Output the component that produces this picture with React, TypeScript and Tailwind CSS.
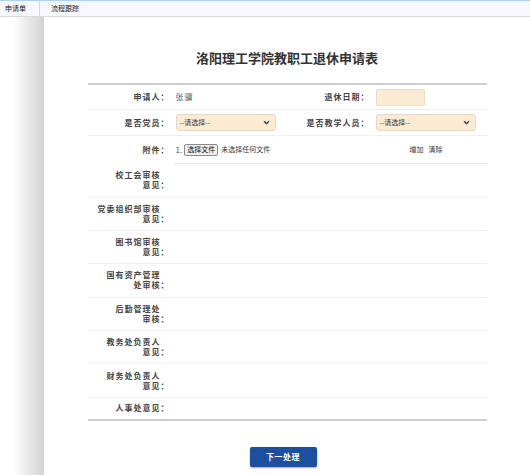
import React from "react";

function Chevron() {
  return (
    <svg width="7" height="5" viewBox="0 0 7 5" className="shrink-0">
      <path d="M1 1.2 L3.5 3.6 L6 1.2" fill="none" stroke="#333" strokeWidth="1.3" />
    </svg>
  );
}

function Select({ w }: { w: string }) {
  return (
    <div
      className={`${w} h-[17px] bg-[#fbebd3] border border-[#e3d9c9] rounded-[3px] flex items-center justify-between pl-[3px] pr-[5px] text-[7px] text-[#333]`}
    >
      <span>--请选择--</span>
      <Chevron />
    </div>
  );
}

function Label({ lines }: { lines: string[] }) {
  if (lines.length === 1) {
    return (
      <div className="h-full flex items-center justify-end pr-[4px] text-[8px] font-bold tracking-[1px] text-[#444] leading-[10px]">
        {lines[0]}
      </div>
    );
  }
  return (
    <div className="h-full flex flex-col items-end justify-center pr-[4px] text-[8px] font-bold tracking-[1px] text-[#444] leading-[10px]">
      <div className="pr-[9px]">{lines[0]}</div>
      <div>{lines[1]}</div>
    </div>
  );
}

const opinionRows: string[][] = [
  ["校工会审核", "意见："],
  ["党委组织部审核", "意见："],
  ["图书馆审核", "意见："],
  ["国有资产管理", "处审核："],
  ["后勤管理处", "审核："],
  ["教务处负责人", "意见："],
  ["财务处负责人", "意见："],
];

export default function App() {
  return (
    <div className="w-[530px] h-[475px] overflow-hidden flex flex-col bg-white font-['Noto_Sans_CJK_SC','Noto_Sans',sans-serif]">
      {/* top tab bar */}
      <div className="h-[17px] shrink-0 border-t border-t-[#a9d3f4] border-b border-b-[#d6dadf] bg-[#f5f8fc] flex items-stretch text-[7px] text-[#222]">
        <div className="w-[40px] pl-[5px] border-r border-r-[#d6dadf] flex items-center">申请单</div>
        <div className="pl-[11px] flex items-center">流程跟踪</div>
      </div>

      <div className="flex flex-1">
        {/* left shaded strip */}
        <div className="w-[44px] shrink-0 bg-[linear-gradient(to_right,#ffffff_30%,#d2d2d2)]" />

        {/* main */}
        <div className="flex-1 flex flex-col items-center">
          <div className="mt-[33px] h-[16px] leading-[16px] text-[13px] font-bold text-[#333]">
            洛阳理工学院教职工退休申请表
          </div>

          <div className="mt-[17px] w-[399px] border-t-2 border-t-[#cfcfcf]">
            {/* row 1 */}
            <div className="h-[25px] grid grid-cols-[86px_116px_84px_113px] border-b border-b-[#efefef]">
              <Label lines={["申请人："]} />
              <div className="flex items-center pl-[2px] text-[8px] tracking-[1px] text-[#555]">张骥</div>
              <Label lines={["退休日期："]} />
              <div className="flex items-center pl-[2px]">
                <div className="w-[49px] h-[17px] bg-[#fcebd3] border border-[#e6dccb] rounded-[2px]" />
              </div>
            </div>

            {/* row 2 */}
            <div className="h-[26px] grid grid-cols-[86px_116px_84px_113px] border-b border-b-[#efefef]">
              <Label lines={["是否党员："]} />
              <div className="flex items-center pl-[2px]">
                <Select w="w-[100px]" />
              </div>
              <Label lines={["是否教学人员："]} />
              <div className="flex items-center pl-[2px]">
                <Select w="w-[100px]" />
              </div>
            </div>

            {/* row 3 attachments */}
            <div className="h-[28px] grid grid-cols-[86px_313px]">
              <Label lines={["附件："]} />
              <div className="flex items-center pl-[2px] border-b border-b-[#e6e6e6] text-[7px] text-[#333]">
                <div className="w-[232px] flex items-center">
                  <span className="text-[8px] text-[#555] mr-[2px]">1.</span>
                  <span className="h-[12px] px-[2px] flex items-center bg-[#efefef] border border-[#8a8a8a] rounded-[2px] text-[7px] text-[#111]">
                    选择文件
                  </span>
                  <span className="ml-[3px]">未选择任何文件</span>
                </div>
                <span className="ml-[2px]">增加</span>
                <span className="ml-[5px]">清除</span>
              </div>
            </div>

            {opinionRows.map((l, i) => (
              <div key={i} className="h-[33.4px] grid grid-cols-[86px_313px] border-b border-b-[#efefef]">
                <Label lines={l} />
                <div />
              </div>
            ))}

            <div className="h-[23px] grid grid-cols-[86px_313px] border-b-2 border-b-[#cfcfcf]">
              <Label lines={["人事处意见："]} />
              <div />
            </div>
          </div>

          <div className="w-[399px] mt-[26px] pl-[162px]">
            <button className="w-[67px] h-[20px] bg-[#1d4fa0] rounded-[2px] shadow-[0_1px_2px_rgba(0,0,0,0.35)] text-white text-[8px] font-bold flex items-center justify-center tracking-[0.5px]">
              下一处理
            </button>
          </div>
        </div>
      </div>
    </div>
  );
}
